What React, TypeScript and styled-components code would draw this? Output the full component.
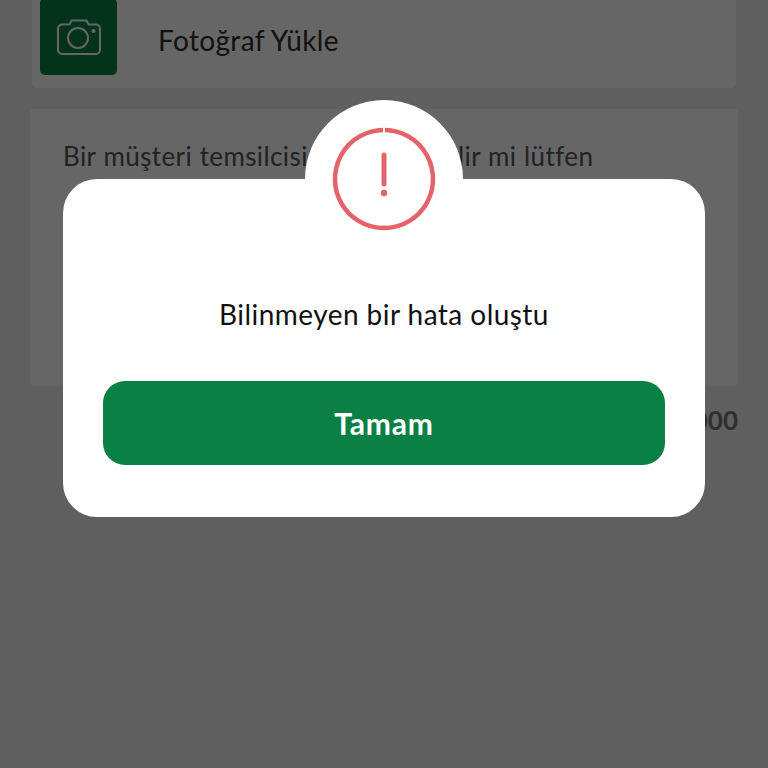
import React from "react";
import styled, { createGlobalStyle } from "styled-components";

const GlobalStyle = createGlobalStyle`
  html, body {
    margin: 0;
    padding: 0;
    background: #eeeeee;
    font-family: "Lato", "Noto Sans", sans-serif;
  }
`;

const Page = styled.div`
  position: relative;
  display: flex;
  flex-direction: column;
  box-sizing: border-box;
  width: 768px;
  height: 768px;
  padding: 0 30px;
  overflow: hidden;
  background: #eeeeee;
`;

const UploadCard = styled.div`
  display: flex;
  gap: 41px;
  height: 88px;
  margin: 0 2px 21px;
  padding-left: 8px;
  background: #ffffff;
  border-radius: 0 0 6px 6px;
`;

const Thumb = styled.div`
  display: flex;
  align-items: center;
  justify-content: center;
  width: 77px;
  height: 77px;
  margin-top: -2px;
  flex: none;
  background: #0a8044;
  border-radius: 5px;
`;

const UploadLabel = styled.span`
  margin-top: 22px;
  font-size: 28px;
  line-height: 36px;
  letter-spacing: 0.35px;
  color: #2e2e2e;
`;

const MessageCard = styled.div`
  box-sizing: border-box;
  height: 277px;
  padding: 30px 33px;
  background: #ffffff;
  border-radius: 4px;
`;

const MessageText = styled.p`
  margin: 0;
  font-size: 26px;
  line-height: 34px;
  letter-spacing: 0.4px;
  word-spacing: 0.5px;
  color: #555555;
`;

const Counter = styled.div`
  margin-top: 18px;
  font-size: 26px;
  font-weight: 700;
  line-height: 32px;
  text-align: right;
  color: #777777;
`;

const Scrim = styled.div`
  position: absolute;
  inset: 0;
  background: rgba(0, 0, 0, 0.6);
`;

const Dialog = styled.div`
  position: absolute;
  left: 63px;
  top: 179px;
  display: flex;
  flex-direction: column;
  align-items: center;
  box-sizing: border-box;
  width: 642px;
  height: 338px;
  padding: 117px 40px 0;
  background: #ffffff;
  border-radius: 34px;
`;

const Badge = styled.div`
  position: absolute;
  left: 242px;
  top: -79px;
  display: flex;
  align-items: center;
  justify-content: center;
  width: 158px;
  height: 158px;
  background: #ffffff;
  border-radius: 50%;
`;

const DialogMessage = styled.p`
  margin: 0 0 49px;
  font-size: 28px;
  line-height: 36px;
  letter-spacing: 0.45px;
  color: #111111;
`;

const ConfirmButton = styled.button`
  width: 100%;
  height: 84px;
  border: 0;
  border-radius: 22px;
  background: #0a8044;
  font-family: inherit;
  font-size: 30px;
  font-weight: 700;
  letter-spacing: 0.8px;
  color: #ffffff;
`;

const CameraIcon = () => (
  <svg width="46" height="36" viewBox="0 0 46 36" fill="none" stroke="#ffffff" strokeWidth="2">
    <path d="M6 5.5h7.5l2-4h15l2 4H40a4 4 0 0 1 4 4V31a4 4 0 0 1-4 4H6a4 4 0 0 1-4-4V9.5a4 4 0 0 1 4-4Z" />
    <circle cx="22" cy="19" r="10" />
    <circle cx="37.5" cy="12" r="2" fill="#ffffff" stroke="none" />
  </svg>
);

const AlertIcon = () => (
  <svg width="106" height="106" viewBox="0 0 106 106" fill="none" stroke="#e4626a" strokeLinecap="round">
    <path d="M54 4A49 49 0 1 1 52 4" strokeWidth="4.5" strokeLinecap="butt" />
    <path d="M53 29V58" strokeWidth="5" />
    <circle cx="53" cy="67" r="3.2" fill="#e4626a" stroke="none" />
  </svg>
);

const App: React.FC = () => {
  return (
    <>
      <GlobalStyle />
      <Page>
        <UploadCard>
          <Thumb>
            <CameraIcon />
          </Thumb>
          <UploadLabel>Fotoğraf Yükle</UploadLabel>
        </UploadCard>
        <MessageCard>
          <MessageText>Bir müşteri temsilcisi beni arayabilir mi lütfen</MessageText>
        </MessageCard>
        <Counter>48/1000</Counter>
        <Scrim />
        <Dialog>
          <Badge>
            <AlertIcon />
          </Badge>
          <DialogMessage>Bilinmeyen bir hata oluştu</DialogMessage>
          <ConfirmButton>Tamam</ConfirmButton>
        </Dialog>
      </Page>
    </>
  );
};

export default App;
